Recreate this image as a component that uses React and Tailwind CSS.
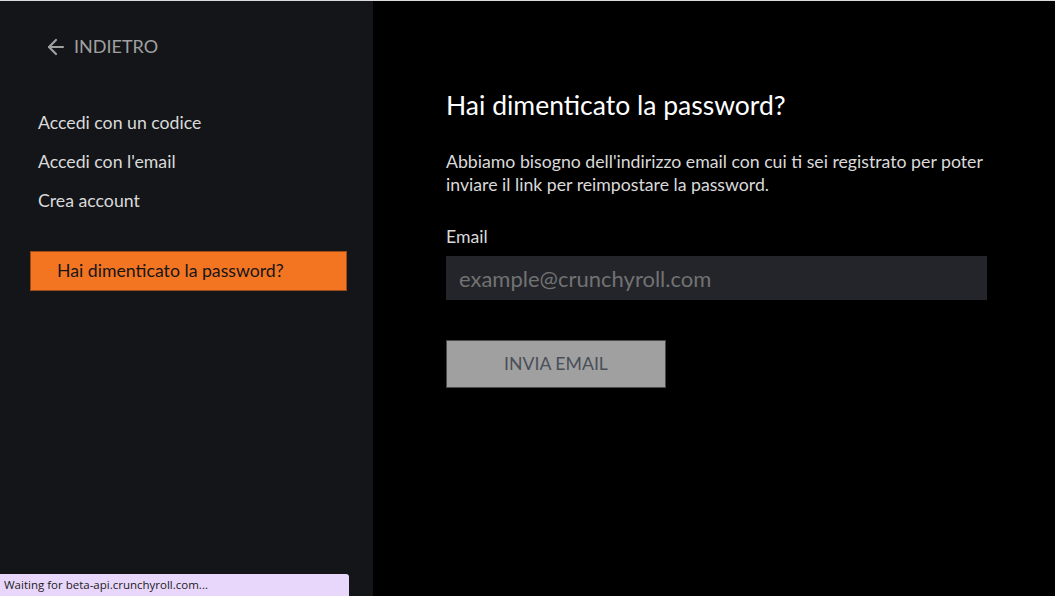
import { ArrowLeft } from 'lucide-react';

const links = ['Accedi con un codice', "Accedi con l'email", 'Crea account'];

const App = () => {
  return (
    <div className="relative flex h-[596px] w-full overflow-hidden border-t border-[#dcdcdc] bg-black font-['Lato','Open_Sans',sans-serif]">
      {/* Sidebar */}
      <aside className="flex w-[373px] shrink-0 flex-col bg-[#141519]">
        <button className="ml-[44px] mt-[32px] flex items-center gap-[6px] text-[18px] uppercase text-[#a0a0a0]">
          <ArrowLeft size={24} strokeWidth={2.2} />
          <span>Indietro</span>
        </button>

        <nav className="ml-[38px] mt-[51px] flex flex-col gap-[16px]">
          {links.map(link => (
            <a key={link} href="#" className="text-[17.7px] leading-[23px] text-[#dadada]">
              {link}
            </a>
          ))}
        </nav>

        <div className="ml-[30px] mt-[39px] flex h-[40px] w-[317px] items-center border border-[#9c4c18] bg-[#f47521] pl-[26px] text-[17.7px] text-[#141519]">
          Hai dimenticato la password?
        </div>
      </aside>

      {/* Reset form */}
      <main className="flex-1 pl-[73px] pt-[88px]">
        <h1 className="text-[26.5px] leading-[32px] text-white">Hai dimenticato la password?</h1>
        <p className="mt-[29px] max-w-[560px] text-[17.7px] leading-[23px] text-[#dadada]">
          Abbiamo bisogno dell'indirizzo email con cui ti sei registrato per poter inviare il link per reimpostare la password.
        </p>

        <label className="mt-[30px] block text-[17.7px] leading-[21px] text-[#dadada]">Email</label>
        <input
          type="email"
          placeholder="example@crunchyroll.com"
          className="mt-[9px] h-[44px] w-[541px] bg-[#23252b] px-[13px] text-[22px] text-white outline-none placeholder:text-[#727272]"
        />

        <button className="mt-[40px] block h-[48px] w-[220px] border border-[#4a4a4a] bg-[#a0a0a0] text-[17.7px] uppercase text-[#4a4e58]">
          Invia email
        </button>
      </main>

      {/* Browser status bubble */}
      <div className="absolute bottom-0 left-0 flex h-[22px] w-[349px] items-center rounded-tr-[3px] bg-[#e8d7fb] pl-[4px] font-['Open_Sans',sans-serif] text-[11.5px] text-[#222]">
        Waiting for beta-api.crunchyroll.com...
      </div>
    </div>
  );
};

export default App;
